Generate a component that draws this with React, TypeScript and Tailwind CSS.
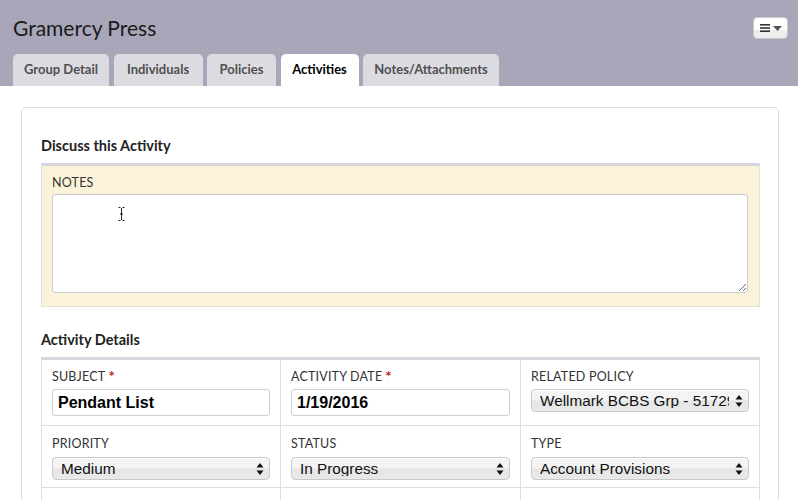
import React from 'react';

const TABS = [
    { label: 'Group Detail', w: 'w-[96px]' },
    { label: 'Individuals', w: 'w-[89px]' },
    { label: 'Policies', w: 'w-[69px]' },
    { label: 'Activities', w: 'w-[78px]', active: true },
    { label: 'Notes/Attachments', w: 'w-[136px]' },
];

const SANS = "font-['Lato','Open_Sans',sans-serif]";

const Arrows = () => (
    <svg width="8" height="14" viewBox="0 0 8 14" className="shrink-0">
        <path d="M4 1 L7.5 5.5 L0.5 5.5 Z" fill="#111" />
        <path d="M4 13 L7.5 8.5 L0.5 8.5 Z" fill="#111" />
    </svg>
);

const FakeSelect = ({ value }: { value: string }) => (
    <div className="relative mt-[5px] h-[23px] w-full min-w-0 rounded-[4px] border border-[#c9c9c9] bg-[linear-gradient(#f4f4f4_0%,#f4f4f4_45%,#e6e6e6_55%,#e9e9e9_100%)] shadow-[inset_0_1px_0_#fff] flex items-center pl-[8px] pr-[5px] overflow-hidden">
        <span className="flex-1 min-w-0 whitespace-nowrap overflow-hidden text-[15.3px] text-[#111] font-['Liberation_Sans',Arial,sans-serif] leading-none">
            {value}
        </span>
        <span className="pl-[6px] shrink-0"><Arrows /></span>
    </div>
);

const Label = ({ text, required }: { text: string; required?: boolean }) => (
    <div className={`h-[16px] leading-[16px] text-[12.5px] tracking-[0.2px] text-[#333] ${SANS} flex items-start`}>
        {text}
        {required && <span className="ml-[3px] text-[#c1272d] text-[15px] font-bold leading-[14px]">*</span>}
    </div>
);

const TextBox = ({ value }: { value: string }) => (
    <div className="mt-[4px] h-[27px] w-full rounded-[3px] border border-[#cfcfcf] bg-white flex items-center px-[5px] text-[16px] font-bold text-black font-['Liberation_Sans',Arial,sans-serif]">
        {value}
    </div>
);

export default function App() {
    return (
        <div className={`w-[798px] h-[500px] overflow-hidden bg-white ${SANS}`}>
            {/* Header */}
            <div className="relative h-[86px] bg-[#a8a6b8] pl-[13px]">
                <div className="pt-[14px] h-[42px] leading-[28px] text-[21px] text-[#1a1a1a]">Gramercy Press</div>
                <div className="mt-[12px] flex gap-[4.5px]">
                    {TABS.map((t) => (
                        <div
                            key={t.label}
                            className={`${t.w} h-[32px] rounded-t-[5px] flex items-center justify-center text-[13px] font-bold ${
                                t.active ? 'bg-white text-black' : 'bg-[#dcdbe1] text-[#4f4f4f]'
                            }`}
                        >
                            {t.label}
                        </div>
                    ))}
                </div>
                <div className="absolute left-[753px] top-[17px] w-[35px] h-[22px] rounded-[4px] border border-[#c9c9c9] bg-[linear-gradient(#fff_0%,#fff_60%,#ededed_61%,#ededed_100%)] flex items-center justify-center gap-[3px]">
                    <svg width="10" height="8" viewBox="0 0 10 8">
                        <rect x="0" y="0" width="10" height="1.6" fill="#333" />
                        <rect x="0" y="3.2" width="10" height="1.6" fill="#333" />
                        <rect x="0" y="6.4" width="10" height="1.6" fill="#333" />
                    </svg>
                    <svg width="9" height="5" viewBox="0 0 9 5">
                        <path d="M0 0 H9 L4.5 5 Z" fill="#555" />
                    </svg>
                </div>
            </div>

            {/* Content */}
            <div className="pt-[21px] pl-[21px] pr-[19px]">
                <div className="rounded-[5px] border border-[#dedede] pt-[28px] pl-[19px] pr-[18px] h-[420px]">
                    <h2 className="h-[20px] leading-[20px] text-[14.5px] font-bold text-[#222]">Discuss this Activity</h2>
                    <div className="mt-[7px] border-t-[3px] border-t-[#d7d6dc] border-x border-b border-x-[#e2e0d8] border-b-[#e2e0d8] bg-[#fbf3d9] pt-[9px] pl-[10px] pr-[11px] pb-[13px]">
                        <Label text="NOTES" />
                        <div className="relative mt-[3px]">
                            <textarea className="block w-full h-[99px] rounded-[3px] border border-[#cdcdcd] bg-white resize-y outline-none" />
                            <svg className="absolute left-[66px] top-[13px]" width="7" height="14" viewBox="0 0 7 14">
                                <path d="M0.5 0.5 H2.5 M4.5 0.5 H6.5 M3.5 1 V13 M0.5 13.5 H2.5 M4.5 13.5 H6.5 M2 7 H5" stroke="#222" strokeWidth="1" fill="none" />
                            </svg>
                        </div>
                    </div>

                    <h2 className="mt-[23px] h-[20px] leading-[20px] text-[14.5px] font-bold text-[#222]">Activity Details</h2>
                    <div className="mt-[7px] border-t-[3px] border-t-[#d7d6dc] border-x border-x-[#dedede] grid grid-cols-[239px_240px_minmax(0,1fr)]">
                        <div className="border-b border-r border-[#dedede] pt-[9px] pb-[9px] px-[10px]">
                            <Label text="SUBJECT" required />
                            <TextBox value="Pendant List" />
                        </div>
                        <div className="border-b border-r border-[#dedede] pt-[9px] pb-[9px] px-[10px]">
                            <Label text="ACTIVITY DATE" required />
                            <TextBox value="1/19/2016" />
                        </div>
                        <div className="min-w-0 border-b border-[#dedede] pt-[9px] pb-[9px] px-[10px]">
                            <Label text="RELATED POLICY" />
                            <div className="mt-[-1px]">
                                <FakeSelect value="Wellmark BCBS Grp - 51729" />
                            </div>
                        </div>
                        <div className="border-b border-r border-[#dedede] pt-[10px] pb-[7px] px-[10px]">
                            <Label text="PRIORITY" />
                            <FakeSelect value="Medium" />
                        </div>
                        <div className="border-b border-r border-[#dedede] pt-[10px] pb-[7px] px-[10px]">
                            <Label text="STATUS" />
                            <FakeSelect value="In Progress" />
                        </div>
                        <div className="min-w-0 border-b border-[#dedede] pt-[10px] pb-[7px] px-[10px]">
                            <Label text="TYPE" />
                            <FakeSelect value="Account Provisions" />
                        </div>
                        <div className="h-[40px] border-r border-[#dedede]" />
                        <div className="h-[40px] border-r border-[#dedede]" />
                        <div className="h-[40px]" />
                    </div>
                </div>
            </div>
        </div>
    );
}
